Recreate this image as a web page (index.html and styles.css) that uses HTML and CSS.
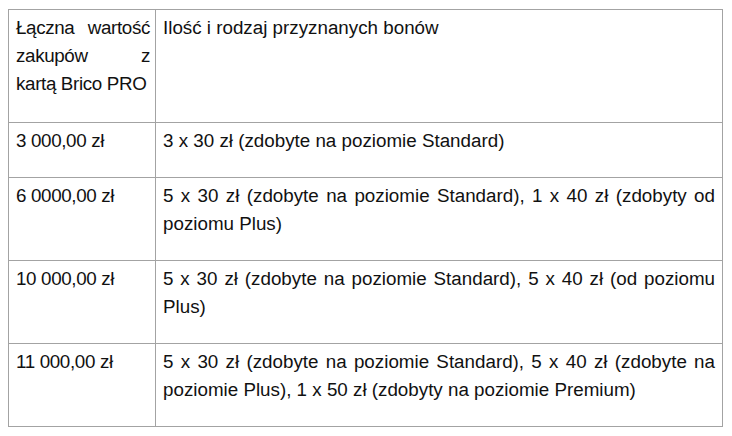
FILE: index.html
```html
<!DOCTYPE html>
<html lang="pl">
<head>
<meta charset="utf-8">
<link rel="stylesheet" href="styles.css">
</head>
<body>
<table class="bonus-table">
  <colgroup>
    <col class="col-amount">
    <col class="col-bonus">
  </colgroup>
  <tbody>
    <tr class="row-head">
      <td class="cell-amount">Łączna wartość zakupów z kartą&nbsp;Brico&nbsp;PRO</td>
      <td>Ilość i rodzaj przyznanych bonów</td>
    </tr>
    <tr>
      <td class="cell-amount">3&nbsp;000,00 zł</td>
      <td>3 x 30 zł (zdobyte na poziomie Standard)</td>
    </tr>
    <tr>
      <td class="cell-amount">6&nbsp;0000,00 zł</td>
      <td>5 x 30 zł (zdobyte na poziomie Standard), 1 x 40 zł (zdobyty od poziomu Plus)</td>
    </tr>
    <tr>
      <td class="cell-amount">10&nbsp;000,00 zł</td>
      <td>5 x 30 zł (zdobyte na poziomie Standard), 5 x 40 zł (od poziomu Plus)</td>
    </tr>
    <tr>
      <td class="cell-amount">11&nbsp;000,00 zł</td>
      <td>5 x 30 zł (zdobyte na poziomie Standard), 5 x 40 zł (zdobyte na poziomie Plus), 1 x 50 zł (zdobyty na poziomie Premium)</td>
    </tr>
  </tbody>
</table>
</body>
</html>
```
FILE: styles.css
```css
html, body {
  background: #ffffff;
}
body {
  margin: 9px 8px 8px 8px;
  font-family: "Liberation Sans", Arial, sans-serif;
  font-size: 18.8px;
  line-height: 28px;
  color: #111111;
}
.bonus-table {
  border-collapse: collapse;
  table-layout: fixed;
  width: 715px;
}
.col-amount {
  width: 147px;
}
.bonus-table td {
  border: 1px solid #a3a3a3;
  vertical-align: top;
  text-align: justify;
  padding: 4px 7px 22px 7px;
}
.bonus-table .cell-amount {
  letter-spacing: -0.35px;
  padding-right: 5px;
}
.row-head td {
  padding-bottom: 24px;
}
```
